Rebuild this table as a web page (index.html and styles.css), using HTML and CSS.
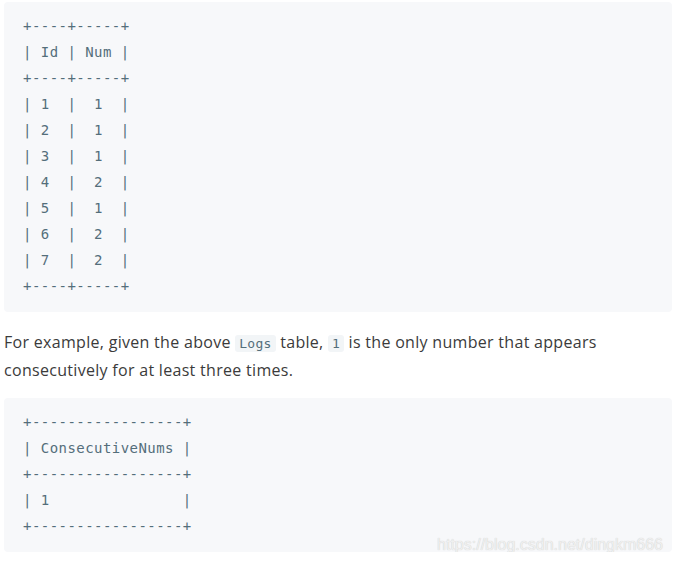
FILE: index.html
```html
<!DOCTYPE html>
<html>
<head>
<meta charset="utf-8">
<link rel="stylesheet" href="styles.css">
</head>
<body>
<div class="page">
<pre class="block">+----+-----+
| Id | Num |
+----+-----+
| 1  |  1  |
| 2  |  1  |
| 3  |  1  |
| 4  |  2  |
| 5  |  1  |
| 6  |  2  |
| 7  |  2  |
+----+-----+</pre>
<p class="text">For example, given the above <code class="inline">Logs</code> table, <code class="inline">1</code> is the only number that appears consecutively for at least three times.</p>
<pre class="block">+-----------------+
| ConsecutiveNums |
+-----------------+
| 1               |
+-----------------+</pre>
<div class="watermark">https://blog.csdn.net/dingkm666</div>
</div>
</body>
</html>
```
FILE: styles.css
```css
html, body {
  margin: 0;
  padding: 0;
  background: #ffffff;
}
.page {
  position: relative;
  padding: 2px 1px 0 4px;
  width: 668px;
}
.block {
  margin: 0;
  background: #f7f8fa;
  border-radius: 4px;
  padding: 11px 19px 13px;
  font-family: "DejaVu Sans Mono", monospace;
  font-size: 14px;
  letter-spacing: 0.45px;
  line-height: 26px;
  color: #546e7a;
}
.text {
  margin: 17px 0 15px;
  font-family: "Open Sans", sans-serif;
  font-size: 16px;
  letter-spacing: 0.3px;
  line-height: 26px;
  color: #3b3b3b;
}
.inline {
  font-family: "DejaVu Sans Mono", monospace;
  font-size: 13px;
  letter-spacing: 0.3px;
  color: #546e7a;
  background: #f2f5f7;
  border-radius: 3px;
  padding: 1px 4px;
}
.watermark {
  position: absolute;
  right: 10px;
  top: 536px;
  font-family: "Liberation Sans", sans-serif;
  font-size: 16px;
  color: #f0f0f0;
  text-shadow: 0 0 1px #c4c4c4;
}
```
